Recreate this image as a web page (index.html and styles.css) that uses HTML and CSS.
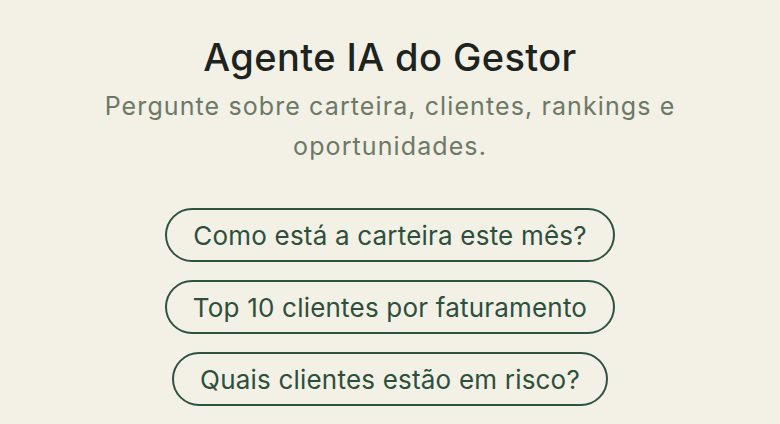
FILE: index.html
```html
<!DOCTYPE html>
<html lang="pt-BR">
<head>
    <meta charset="UTF-8">
    <meta name="viewport" content="width=device-width, initial-scale=1.0">
    <title>Agente IA do Gestor</title>
    <link rel="stylesheet" href="styles.css">
</head>
<body>
    <main class="agente">
        <h1 class="titulo">Agente IA do Gestor</h1>
        <p class="subtitulo">Pergunte sobre carteira, clientes, rankings e oportunidades.</p>
        <div class="sugestoes">
            <button class="sugestao">Como está a carteira este mês?</button>
            <button class="sugestao">Top 10 clientes por faturamento</button>
            <button class="sugestao">Quais clientes estão em risco?</button>
        </div>
    </main>
</body>
</html>
```

FILE: styles.css
```css
/* Estilos gerais */
body {
    margin: 0;
    padding: 0;
    background-color: #f3f0e6;
    font-family: 'Inter', 'Liberation Sans', sans-serif;
}

.agente {
    display: flex;
    flex-direction: column;
    align-items: center;
    padding-top: 33px;
}

.titulo {
    margin: 0;
    font-size: 38px;
    font-weight: 500;
    line-height: 48px;
    letter-spacing: 0.4px;
    color: #1d231d;
}

.subtitulo {
    margin: 5px 0 0;
    width: 620px;
    text-align: center;
    font-size: 25px;
    line-height: 40px;
    letter-spacing: 1.1px;
    color: #6c7966;
}

.sugestoes {
    display: flex;
    flex-direction: column;
    align-items: center;
    gap: 18px;
    margin-top: 42px;
}

.sugestao {
    height: 54px;
    padding: 0 26px;
    background: transparent;
    border: 2px solid #2f5341;
    border-radius: 27px;
    font-family: inherit;
    font-size: 26px;
    letter-spacing: 0.2px;
    color: #2d4f3c;
    cursor: pointer;
}
```
